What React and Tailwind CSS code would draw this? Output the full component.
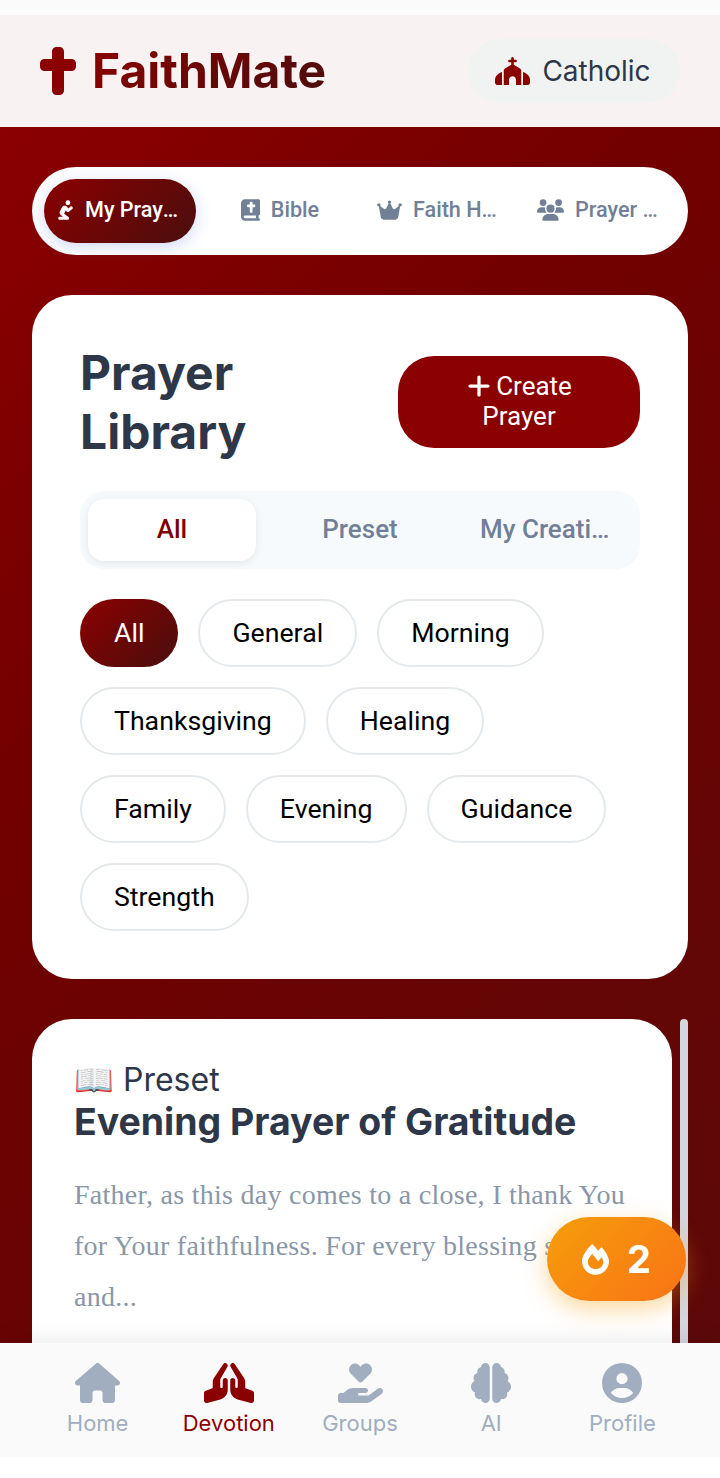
import React from 'react';
import { FaFireAlt } from 'react-icons/fa';
import { FaCross, FaPersonPraying, FaBookBible, FaCrown, FaUsers, FaPlus, FaHouse, FaHandsPraying, FaHandHoldingHeart, FaBrain, FaCircleUser } from 'react-icons/fa6';

const sans = "font-['Inter','Noto_Sans',sans-serif]";
const roboto = "font-['Roboto',sans-serif]";

const topTabs = [
    { label: 'My Prayers', icon: FaPersonPraying, size: 'w-[17px]', active: true },
    { label: 'Bible', icon: FaBookBible, size: 'w-[19px]' },
    { label: 'Faith Heroes', icon: FaCrown, size: 'w-[25px]' },
    { label: 'Prayer Groups', icon: FaUsers, size: 'w-[27px]' },
];

const chipRows = [
    ['All', 'General', 'Morning'],
    ['Thanksgiving', 'Healing'],
    ['Family', 'Evening', 'Guidance'],
    ['Strength'],
];

const navItems = [
    { label: 'Home', icon: FaHouse, size: 'w-[45px]' },
    { label: 'Devotion', icon: FaHandsPraying, size: 'w-[50px]', active: true },
    { label: 'Groups', icon: FaHandHoldingHeart, size: 'w-[45px]' },
    { label: 'AI', icon: FaBrain, size: 'w-10' },
    { label: 'Profile', icon: FaCircleUser, size: 'w-10' },
];

// church with the rounded side wings of the reference
const ChurchIcon = () => (
    <svg viewBox="0 0 640 512" fill="currentColor" className="h-7 w-[35px] text-[#8b0000]">
        <path d="M344 24c0-13.3-10.7-24-24-24s-24 10.7-24 24V48H264c-13.3 0-24 10.7-24 24s10.7 24 24 24h32v46.4L183.3 210c-14.5 8.7-23.3 24.3-23.3 41.2V512h96V416c0-35.3 28.7-64 64-64s64 28.7 64 64v96h96V251.2c0-16.9-8.8-32.5-23.3-41.2L344 142.4V96h32c13.3 0 24-10.7 24-24s-10.7-24-24-24H344V24z" />
        <path d="M128 273C60 300 0 340 0 420V464c0 26.5 21.5 48 48 48H128Z" />
        <path d="M512 273C580 300 640 340 640 420V464c0 26.5-21.5 48-48 48H512Z" />
    </svg>
);

const App = () => {
    return (
        <div className={`${sans} relative flex h-[1478px] w-[720px] flex-col overflow-hidden bg-white`}>
            <div className="h-[15px] bg-[#fbfbfb]" />

            <header className="flex h-[112px] items-center justify-between bg-[#f8f2f2] pl-10 pr-10">
                <div className="flex items-center gap-4">
                    <FaCross className="h-12 w-9 text-[#8b0000]" />
                    <span className="bg-[linear-gradient(135deg,#8b0000,#4a0e0e)] bg-clip-text text-[48px] leading-[58px] font-bold text-transparent">
                        FaithMate
                    </span>
                </div>
                <div className="flex h-16 w-[212px] items-center justify-center gap-3 rounded-[32px] bg-[#f1f3f3] pr-[2px]">
                    <ChurchIcon />
                    <span className="text-[28px] text-[#2d3748]">Catholic</span>
                </div>
            </header>

            <main className="flex min-h-0 flex-1 flex-col overflow-hidden bg-[linear-gradient(135deg,#8b0000,#720000_35%,#5c0909)] px-8 pt-10">
                <nav className={`${roboto} grid h-[88px] shrink-0 grid-cols-4 gap-2 rounded-[44px] bg-white p-3`}>
                    {topTabs.map((tab) => (
                        <div
                            key={tab.label}
                            className={`flex items-center justify-center gap-[11px] rounded-[32px] px-[13px] pb-[2px] text-[21.6px] font-medium ${tab.active ? 'bg-[linear-gradient(135deg,#8b0000,#4a0e0e)] text-white shadow-[0_4px_15px_rgba(102,126,234,0.3)]' : 'text-[#718096]'}`}
                        >
                            <tab.icon className={`h-[22px] shrink-0 ${tab.size}`} />
                            <span className="truncate">{tab.label}</span>
                        </div>
                    ))}
                </nav>

                <section className="mt-10 h-[684px] shrink-0 rounded-[40px] bg-white p-12">
                    <div className="flex items-center justify-between">
                        <h1 className="w-[240px] text-[48px] leading-[59px] font-bold text-[#2d3748]">Prayer Library</h1>
                        <button className={`${roboto} h-[92px] w-[242px] rounded-[36px] bg-[#8b0000] px-8 pb-[2px] text-center text-[26px] leading-[30px] text-white`}>
                            <FaPlus className="mr-[4px] inline h-[26px] w-[26px] align-[-4px]" />
                            Create Prayer
                        </button>
                    </div>

                    <div className={`${roboto} mt-[30px] grid h-[78px] grid-cols-3 gap-5 rounded-3xl bg-[#f7fafc] p-2 text-[26px] font-medium`}>
                        <div className="flex items-center justify-center rounded-2xl bg-white pb-[2px] text-[#7f0000] shadow-[0_2px_8px_rgba(0,0,0,0.08)]">All</div>
                        <div className="flex items-center justify-center pb-[2px] text-[#718096]">Preset</div>
                        <div className="flex items-center justify-center px-4 pb-[2px] text-[#718096]"><span className="truncate">My Creations</span></div>
                    </div>

                    <div className={`${roboto} mt-[30px] flex flex-col gap-5`}>
                        {chipRows.map((row) => (
                            <div key={row[0]} className="flex gap-5">
                                {row.map((chip) => (
                                    <div
                                        key={chip}
                                        className={`flex h-[68px] items-center rounded-[34px] border-2 px-8 text-[26.7px] ${chip === 'All' ? 'border-transparent bg-[linear-gradient(135deg,#8b0000,#4a0e0e)] bg-origin-border text-white' : 'border-[#e5e9ec] text-black'}`}
                                    >
                                        {chip}
                                    </div>
                                ))}
                            </div>
                        ))}
                    </div>
                </section>

                <div className="mt-10 flex min-h-[500px] shrink-0 gap-2">
                    <article className="flex-1 rounded-t-[40px] bg-white px-[42px] pt-[42px]">
                        <div className="text-[32px] leading-[38px] text-[#2d3748]">📖 Preset</div>
                        <h2 className="text-[37.44px] leading-[46px] font-bold text-[#2d3748]">Evening Prayer of Gratitude</h2>
                        <p className="mt-6 font-['Liberation_Serif',serif] text-[28px] leading-[51px] tracking-[0.27px] text-[#8a97a8]">
                            Father, as this day comes to a close, I thank You for Your faithfulness. For every blessing seen and...
                        </p>
                    </article>
                    <div className="w-2 rounded-t-full bg-[#d3d6de]" />
                </div>
            </main>

            <div className="absolute left-[547px] top-[1217px] flex h-[84px] w-[139px] items-center justify-center gap-[18px] rounded-[42px] bg-[linear-gradient(135deg,#f59e0b,#f97316)] text-white shadow-[0_8px_25px_rgba(245,158,11,0.4)]">
                <FaFireAlt className="h-[31px] w-[27px]" />
                <span className="text-[38px] font-bold">2</span>
            </div>

            <footer className="flex h-[114px] shrink-0 bg-[#fafafa] px-8 pt-5 shadow-[0_-4px_20px_rgba(0,0,0,0.08)]">
                {navItems.map((item) => (
                    <div key={item.label} className={`flex flex-1 flex-col items-center ${item.active ? 'text-[#8b0000]' : 'text-[#a0aec0]'}`}>
                        <item.icon className={`h-10 ${item.size}`} />
                        <span className="mt-[6px] text-[22px] leading-[28px]">{item.label}</span>
                    </div>
                ))}
            </footer>
            <div className="h-[21px] shrink-0 bg-white" />
        </div>
    );
};

export default App;
